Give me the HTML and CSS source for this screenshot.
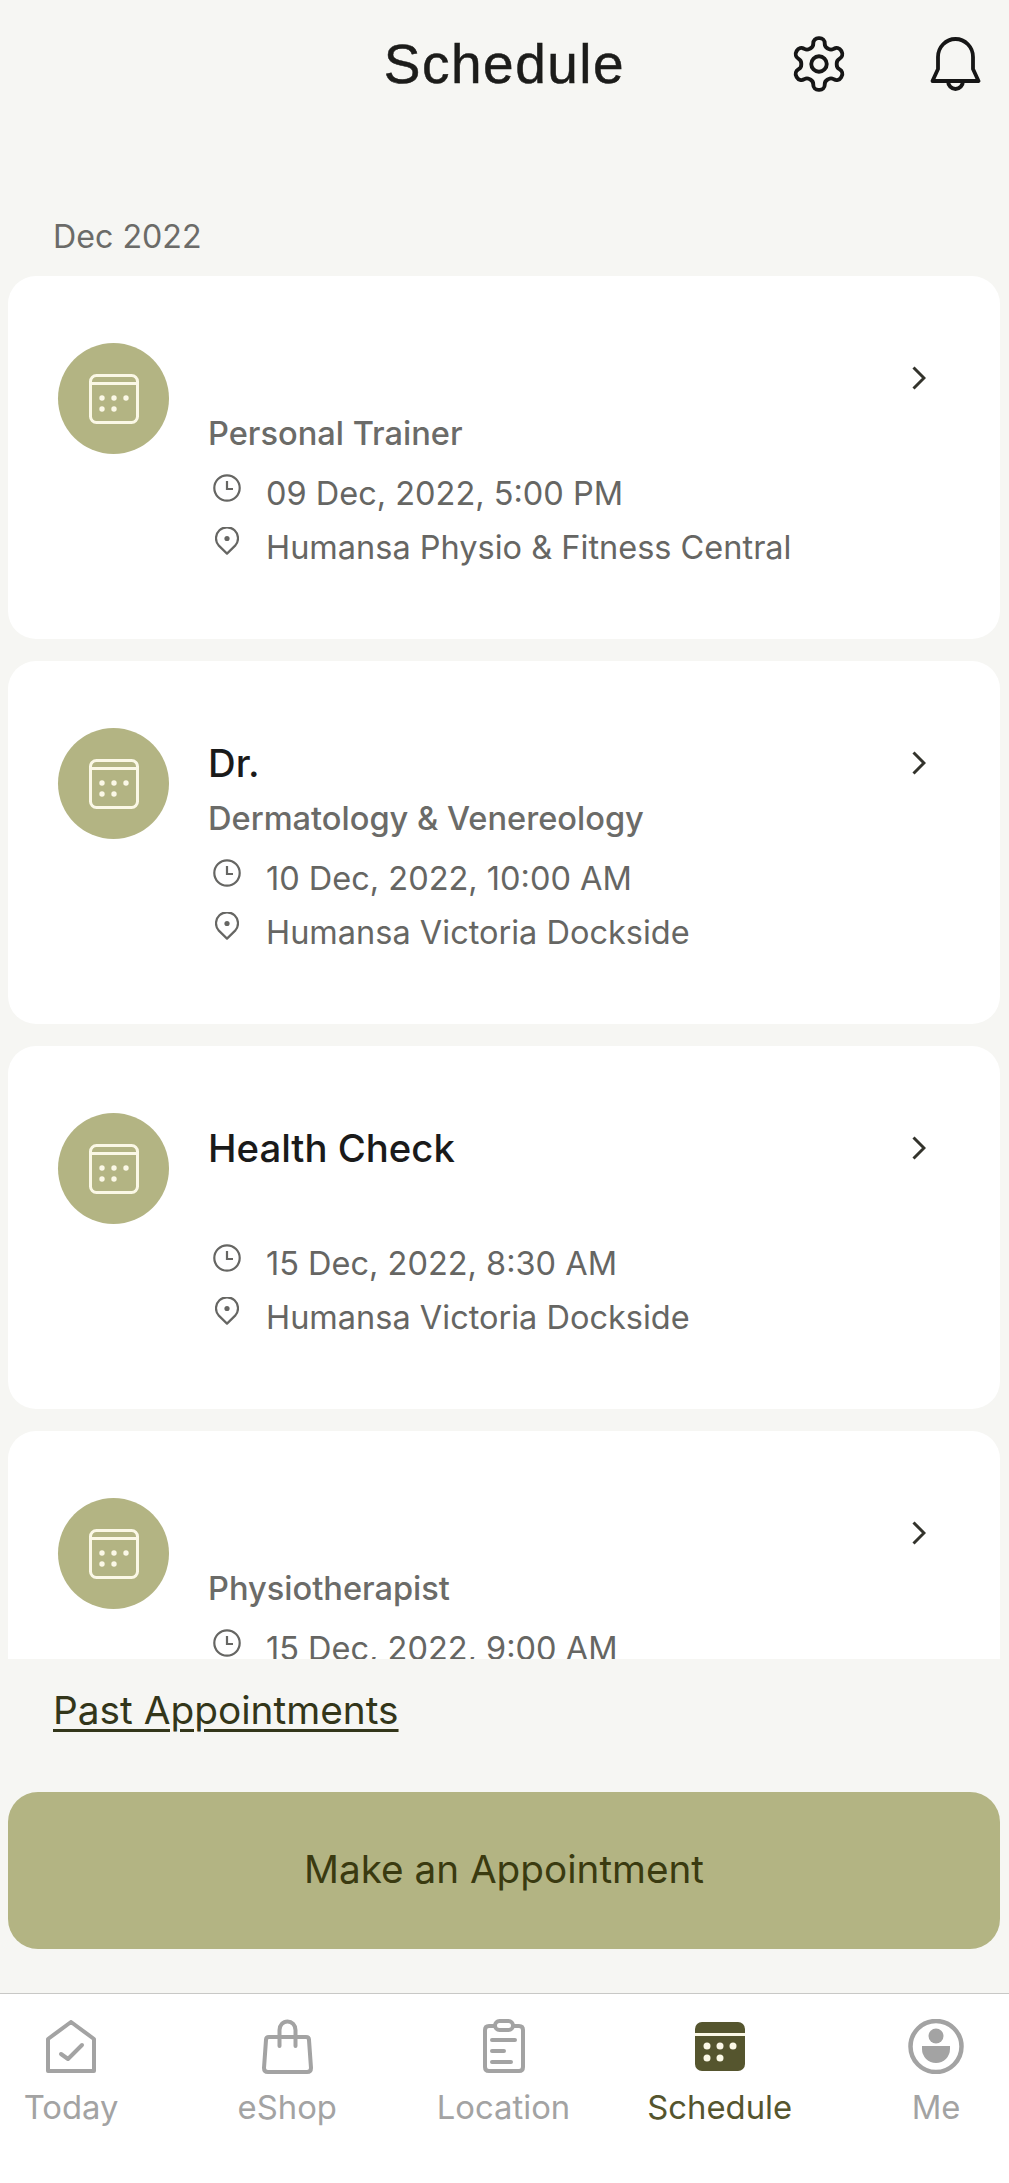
FILE: index.html
```html
<!DOCTYPE html>
<html lang="en">
  <head>
    <meta charset="UTF-8" />
    <meta name="viewport" content="width=device-width, initial-scale=1.0" />
    <title>Schedule</title>
    <link rel="stylesheet" href="styles.css">
  </head>
  <body>
    <!-- shared icons -->
    <svg class="sprite" aria-hidden="true">
      <symbol id="calendar" viewBox="0 0 50 50">
        <rect x="1.5" y="1.5" width="47" height="47" rx="6" fill="none" stroke="currentColor" stroke-width="3" />
        <path d="M1.5 9.5H48.5" stroke="currentColor" stroke-width="3" />
        <circle cx="13" cy="24" r="2.7" fill="currentColor" />
        <circle cx="25" cy="24" r="2.7" fill="currentColor" />
        <circle cx="37" cy="24" r="2.7" fill="currentColor" />
        <circle cx="13" cy="35" r="2.7" fill="currentColor" />
        <circle cx="25" cy="35" r="2.7" fill="currentColor" />
      </symbol>
      <symbol id="clock" viewBox="0 0 28 28">
        <circle cx="14" cy="14" r="12.7" fill="none" stroke="currentColor" stroke-width="2.2" />
        <path d="M14 7V15H20" fill="none" stroke="currentColor" stroke-width="2.2" />
      </symbol>
      <symbol id="pin" viewBox="0 0 24 28">
        <path d="M12 26.6L3.6 18.4A11 11 0 1 1 20.4 18.4Z" fill="none" stroke="currentColor" stroke-width="2.2" stroke-linejoin="round" />
        <circle cx="12" cy="11.5" r="2.6" fill="currentColor" />
      </symbol>
      <symbol id="chevron" viewBox="0 0 14 24">
        <path d="M1.5 1.5L12 12L1.5 22.5" fill="none" stroke="currentColor" stroke-width="3" />
      </symbol>
    </svg>

    <header class="top-bar">
      <span></span>
      <h1>Schedule</h1>
      <div class="top-actions">
        <svg class="icon-gear" viewBox="0 0 24 24" fill="none" stroke="currentColor" stroke-width="1.5" stroke-linejoin="round">
          <path d="M12.22 2h-.44a2 2 0 0 0-2 2v.18a2 2 0 0 1-1 1.73l-.43.25a2 2 0 0 1-2 0l-.15-.08a2 2 0 0 0-2.73.73l-.22.38a2 2 0 0 0 .73 2.73l.15.1a2 2 0 0 1 1 1.72v.51a2 2 0 0 1-1 1.74l-.15.09a2 2 0 0 0-.73 2.73l.22.38a2 2 0 0 0 2.73.73l.15-.08a2 2 0 0 1 2 0l.43.25a2 2 0 0 1 1 1.73V20a2 2 0 0 0 2 2h.44a2 2 0 0 0 2-2v-.18a2 2 0 0 1 1-1.73l.43-.25a2 2 0 0 1 2 0l.15.08a2 2 0 0 0 2.73-.73l.22-.39a2 2 0 0 0-.73-2.73l-.15-.08a2 2 0 0 1-1-1.74v-.5a2 2 0 0 1 1-1.74l.15-.09a2 2 0 0 0 .73-2.73l-.22-.38a2 2 0 0 0-2.73-.73l-.15.08a2 2 0 0 1-2 0l-.43-.25a2 2 0 0 1-1-1.73V4a2 2 0 0 0-2-2z" />
          <circle cx="12" cy="12" r="3" />
        </svg>
        <svg class="icon-bell" viewBox="0 0 51 54" fill="none" stroke="currentColor" stroke-width="3.8" stroke-linejoin="round">
          <path d="M2.5 44L8 32V20A17.5 18 0 0 1 43 20V32L48.5 44Z" />
          <path d="M18 44A7.5 8 0 0 0 33 44" />
        </svg>
      </div>
    </header>

    <p class="month">Dec 2022</p>

    <main class="appointments">
      <article class="card">
        <div class="avatar"><svg class="icon-calendar"><use href="#calendar" /></svg></div>
        <div class="card-body">
          <h2 class="name"></h2>
          <p class="role">Personal Trainer</p>
          <div class="meta"><svg class="icon-clock"><use href="#clock" /></svg><span>09 Dec, 2022, 5:00 PM</span></div>
          <div class="meta"><svg class="icon-pin"><use href="#pin" /></svg><span>Humansa Physio &amp; Fitness Central</span></div>
        </div>
        <svg class="icon-chevron"><use href="#chevron" /></svg>
      </article>

      <article class="card">
        <div class="avatar"><svg class="icon-calendar"><use href="#calendar" /></svg></div>
        <div class="card-body">
          <h2 class="name">Dr.</h2>
          <p class="role">Dermatology &amp; Venereology</p>
          <div class="meta"><svg class="icon-clock"><use href="#clock" /></svg><span>10 Dec, 2022, 10:00 AM</span></div>
          <div class="meta"><svg class="icon-pin"><use href="#pin" /></svg><span>Humansa Victoria Dockside</span></div>
        </div>
        <svg class="icon-chevron"><use href="#chevron" /></svg>
      </article>

      <article class="card">
        <div class="avatar"><svg class="icon-calendar"><use href="#calendar" /></svg></div>
        <div class="card-body">
          <h2 class="name">Health Check</h2>
          <p class="role"></p>
          <div class="meta"><svg class="icon-clock"><use href="#clock" /></svg><span>15 Dec, 2022, 8:30 AM</span></div>
          <div class="meta"><svg class="icon-pin"><use href="#pin" /></svg><span>Humansa Victoria Dockside</span></div>
        </div>
        <svg class="icon-chevron"><use href="#chevron" /></svg>
      </article>

      <article class="card">
        <div class="avatar"><svg class="icon-calendar"><use href="#calendar" /></svg></div>
        <div class="card-body">
          <h2 class="name"></h2>
          <p class="role">Physiotherapist</p>
          <div class="meta"><svg class="icon-clock"><use href="#clock" /></svg><span>15 Dec, 2022, 9:00 AM</span></div>
        </div>
        <svg class="icon-chevron"><use href="#chevron" /></svg>
      </article>
    </main>

    <a class="past-link" href="#">Past Appointments</a>
    <button class="book-btn" type="button">Make an Appointment</button>

    <nav class="tabs">
      <a class="tab" href="#">
        <span class="tab-icon">
          <svg width="50" height="53" viewBox="0 0 50 53" fill="none" stroke="currentColor" stroke-width="4" stroke-linejoin="round" stroke-linecap="round">
            <path d="M2 51V19L25 2L48 19V51Z" />
            <path d="M15 34L22 39L36 25" />
          </svg>
        </span>
        Today
      </a>
      <a class="tab" href="#">
        <span class="tab-icon">
          <svg width="51" height="55" viewBox="0 0 51 55" fill="none" stroke="currentColor" stroke-width="4" stroke-linejoin="round" stroke-linecap="round">
            <path d="M7 18H44Q47 18 47 21L49 49Q49 53 45 53H6Q2 53 2 49L4 21Q4 18 7 18Z" />
            <path d="M17.5 27V11A8 8.500 0 0 1 33.500 11V27" />
          </svg>
        </span>
        eShop
      </a>
      <a class="tab" href="#">
        <span class="tab-icon">
          <svg width="42" height="54" viewBox="0 0 42 54" fill="none" stroke="currentColor" stroke-width="4" stroke-linejoin="round" stroke-linecap="round">
            <path d="M12 7H6Q2 7 2 11V48Q2 52 6 52H36Q40 52 40 48V11Q40 7 36 7H30" />
            <rect x="12" y="2" width="18" height="9" rx="4.500" />
            <path d="M9 21H32M9 32H21M9 43H28" />
          </svg>
        </span>
        Location
      </a>
      <a class="tab tab-active" href="#">
        <span class="tab-icon">
          <svg width="50" height="49" viewBox="0 0 50 49">
            <rect width="50" height="49" rx="7" fill="currentColor" />
            <path d="M0 12.500H50" stroke="#fbf8e6" stroke-width="3" />
            <g fill="#fbf8e6">
              <circle cx="12" cy="24" r="3.500" />
              <circle cx="25" cy="24" r="3.500" />
              <circle cx="38" cy="24" r="3.500" />
              <circle cx="12" cy="36" r="3.500" />
              <circle cx="25" cy="36" r="3.500" />
            </g>
          </svg>
        </span>
        Schedule
      </a>
      <a class="tab" href="#">
        <span class="tab-icon">
          <svg width="56" height="55" viewBox="0 0 56 55" fill="currentColor">
            <circle cx="28" cy="27.500" r="25.500" fill="none" stroke="currentColor" stroke-width="4.500" />
            <circle cx="28" cy="17" r="7.500" />
            <path d="M14 27H42V30A14 14 0 0 1 14 30Z" />
          </svg>
        </span>
        Me
      </a>
    </nav>
  </body>
</html>
```

FILE: styles.css
```css
* {
  box-sizing: border-box;
}

body {
  margin: 0;
  width: 1009px;
  height: 2183px;
  overflow: hidden;
  background-color: #f6f6f3;
  font-family: Inter, "Liberation Sans", sans-serif;
  display: flex;
  flex-direction: column;
}

.sprite {
  display: none;
}

.top-bar {
  height: 128px;
  display: grid;
  grid-template-columns: 1fr auto 1fr;
  align-items: center;
}

.top-bar h1 {
  margin: 0;
  font-family: "Liberation Sans", sans-serif;
  font-size: 55px;
  font-weight: 400;
  letter-spacing: 1.5px;
  -webkit-text-stroke: 0.5px #1c1c1a;
  color: #1c1c1a;
}

.top-actions {
  display: flex;
  justify-content: flex-end;
  align-items: center;
  gap: 80px;
  padding-right: 28px;
  color: #161616;
}

.icon-gear {
  width: 62px;
  height: 62px;
}

.icon-bell {
  width: 51px;
  height: 54px;
}

.month {
  margin: 89px 0 19px 53px;
  font-size: 32.2px;
  line-height: 40px;
  color: #6b6b68;
}

.appointments {
  height: 1383px;
  overflow: hidden;
  padding: 0 9px 0 8px;
  flex: none;
}

.card {
  display: flex;
  height: 363px;
  margin-bottom: 22px;
  padding: 67px 74px 0 50px;
  background-color: #fff;
  border-radius: 28px;
}

.avatar {
  width: 111px;
  height: 111px;
  flex: none;
  display: flex;
  align-items: center;
  justify-content: center;
  border-radius: 50%;
  background-color: #b3b483;
  color: #fbf8e6;
}

.icon-calendar {
  width: 50px;
  height: 50px;
}

.card-body {
  flex: 1;
  margin-left: 39px;
  padding-top: 7px;
}

.name {
  margin: 0;
  height: 55px;
  font-size: 38.3px;
  line-height: 56px;
  font-weight: 500;
  color: #1a1a1a;
}

.role {
  margin: 0 0 6px;
  height: 56px;
  font-size: 32.6px;
  line-height: 56px;
  font-weight: 500;
  color: #6b6b68;
}

.meta {
  display: flex;
  align-items: flex-start;
  height: 54px;
  font-size: 32.5px;
  line-height: 54px;
  color: #666663;
}

.icon-clock {
  width: 28px;
  height: 28px;
  margin: 7px 25px 0 5px;
  flex: none;
}

.icon-pin {
  width: 24px;
  height: 28px;
  margin: 6px 27px 0 7px;
  flex: none;
}

.icon-chevron {
  width: 14px;
  height: 24px;
  margin-top: 23px;
  flex: none;
  color: #33332c;
}

.past-link {
  margin: 31px 0 0 53px;
  align-self: flex-start;
  font-size: 38.8px;
  line-height: 40px;
  color: #33361a;
  text-decoration: underline;
  text-decoration-thickness: 3px;
  text-underline-offset: 5px;
}

.book-btn {
  flex: none;
  height: 157px;
  margin: 62px 9px 0 8px;
  padding-bottom: 4px;
  border: none;
  border-radius: 30px;
  background-color: #b3b483;
  color: #3a3a10;
  font-family: inherit;
  font-size: 38.7px;
}

.tabs {
  flex: 1;
  margin-top: 44px;
  padding: 24px 2px 0 0;
  display: flex;
  justify-content: space-between;
  align-items: flex-start;
  background-color: #fff;
  border-top: 1px solid #c8c8c6;
}

.tab {
  width: 142px;
  display: flex;
  flex-direction: column;
  align-items: center;
  font-size: 32.8px;
  line-height: 36px;
  color: #a3a3a3;
  text-decoration: none;
}

.tab-icon {
  height: 56px;
  margin-bottom: 15px;
  display: flex;
  align-items: center;
}

.tab-active {
  color: #55552e;
}
```
